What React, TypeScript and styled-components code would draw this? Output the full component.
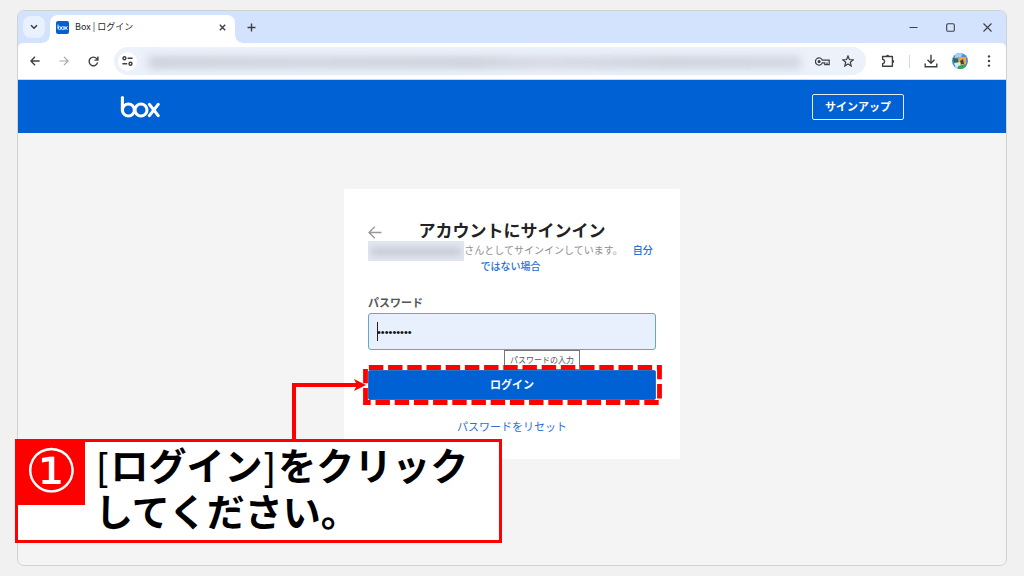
import React from "react";
import styled, { createGlobalStyle } from "styled-components";

const GlobalStyle = createGlobalStyle`
  *, *::before, *::after { box-sizing: border-box; }
  body {
    margin: 0;
    background: #f1f1f1;
    font-family: "Noto Sans CJK JP", "Noto Sans", sans-serif;
  }
  button, input { font-family: inherit; margin: 0; }
  a { text-decoration: none; }
`;

const Stage = styled.div`
  position: relative;
  min-height: 100vh;
  display: flex;
  flex-direction: column;
  padding: 10px 17px;
`;

const BrowserWindow = styled.div`
  flex: 1;
  display: flex;
  flex-direction: column;
  border: 1px solid #d0d1d3;
  border-radius: 7px;
  overflow: hidden;
  background: #f4f4f4;
`;

const TabStrip = styled.div`
  display: flex;
  align-items: center;
  height: 32px;
  padding: 0 0 0 5px;
  background: #d3e3fd;
`;

const IconButton = styled.button<{ $w?: number; $h?: number; $bg?: string; $r?: number }>`
  display: flex;
  align-items: center;
  justify-content: center;
  flex: none;
  width: ${(p) => p.$w ?? 22}px;
  height: ${(p) => p.$h ?? 22}px;
  padding: 0;
  border: 0;
  border-radius: ${(p) => p.$r ?? 11}px;
  background: ${(p) => p.$bg ?? "transparent"};
  color: #3c4043;
`;

const Tab = styled.div`
  position: relative;
  display: flex;
  align-items: center;
  align-self: flex-end;
  width: 185px;
  height: 28px;
  margin-left: 5px;
  padding: 0 2px 4px 6px;
  border-radius: 8px 8px 0 0;
  background: #fff;
  &::before, &::after {
    content: "";
    position: absolute;
    bottom: 0;
    width: 7px;
    height: 7px;
  }
  &::before {
    left: -7px;
    background: radial-gradient(circle at 0 0, transparent 6px, #fff 7px);
  }
  &::after {
    right: -7px;
    background: radial-gradient(circle at 100% 0, transparent 6px, #fff 7px);
  }
`;

const TabTitle = styled.span`
  flex: 1;
  margin-left: 6px;
  font-size: 9px;
  line-height: 14px;
  color: #1f1f1f;
  white-space: nowrap;
`;

const WindowControls = styled.div`
  display: flex;
  margin-left: auto;
`;

const ToolbarBack = styled.div`
  background: #d3e3fd;
`;

const Toolbar = styled.div`
  display: flex;
  align-items: center;
  height: 36px;
  padding: 0 6px;
  border-radius: 5px 5px 0 0;
  background: #fff;
`;

const NavButtons = styled.div`
  display: flex;
  gap: 7px;
`;

const Omnibox = styled.div`
  flex: 1;
  display: flex;
  align-items: center;
  height: 28px;
  margin-left: 10px;
  padding: 0 7px 0 4px;
  border-radius: 14px;
  background: #ecf1fa;
`;

const MaskedUrl = styled.div`
  flex: 1;
  height: 13px;
  margin: 2px 6px 0 11px;
  border-radius: 4px;
  background: linear-gradient(90deg, #cdd1db, #d1d5df 25%, #cdd1db 50%, #d6dae4 60%, #ced2dc 80%, #d2d6e0);
  filter: blur(4px);
`;

const ToolbarActions = styled.div`
  display: flex;
  align-items: center;
`;

const Divider = styled.span`
  width: 1px;
  height: 13px;
  margin-right: 10px;
  background: #c7dafb;
`;

const SiteHeader = styled.header`
  display: flex;
  align-items: center;
  justify-content: space-between;
  height: 54px;
  padding: 0 102px;
  border-top: 1px solid #c4dbf2;
  background: #0061d5;
  background-clip: padding-box;
`;

const LogoLink = styled.a`
  display: flex;
`;

const SignUpButton = styled.button`
  width: 92px;
  height: 26px;
  padding: 0 0 2px;
  border: 1px solid #e2edfa;
  border-radius: 2px;
  background: transparent;
  color: #fff;
  font-size: 11px;
  line-height: 16px;
  font-weight: 700;
`;

const Main = styled.main`
  flex: 1;
  display: flex;
  justify-content: center;
  align-items: flex-start;
  padding: 56px 0 16px;
`;

const Card = styled.form`
  width: 336px;
  padding: 28px 24px 25px;
  border-radius: 2px;
  background: #fff;
`;

const TitleRow = styled.div`
  display: grid;
  grid-template-columns: 14px 1fr 14px;
  align-items: center;
  height: 26px;
`;

const BackButton = styled.button`
  display: flex;
  padding: 4px 0 0;
  border: 0;
  background: none;
`;

const Title = styled.h1`
  margin: 0;
  font-size: 17px;
  line-height: 26px;
  font-weight: 700;
  color: #222;
  text-align: center;
  white-space: nowrap;
`;

const Notice = styled.p`
  margin: 0 0 0 -3px;
  font-family: "Liberation Sans", "Noto Sans CJK JP", sans-serif;
  font-size: 10px;
  line-height: 16px;
  color: #909090;
  text-align: center;
`;

const MaskedUser = styled.span`
  display: inline-block;
  width: 96px;
  height: 20px;
  margin: -2px 0;
  vertical-align: top;
  overflow: hidden;
  background: #e2e7f1;
  &::before {
    content: "";
    display: block;
    height: 9px;
    margin: 6px 3px;
    background: #c9cdd7;
    filter: blur(3px);
  }
`;

const TextLink = styled.a<{ $gap?: number }>`
  margin-left: ${(p) => p.$gap ?? 0}px;
  color: #2a70d8;
  font-weight: 500;
`;

const FieldLabel = styled.label`
  display: block;
  margin-top: 19px;
  font-size: 11px;
  line-height: 16px;
  font-weight: 700;
  color: #555;
`;

const Field = styled.div`
  position: relative;
  margin-top: 3px;
`;

const PasswordInput = styled.input`
  display: block;
  width: 100%;
  height: 37px;
  padding: 0 8px;
  border: 1px solid #64a5cc;
  border-radius: 3px;
  outline: 0;
  background: #e8f0fe;
  color: #111;
  font-family: "Liberation Sans", sans-serif;
  font-size: 11px;
`;

const Caret = styled.span`
  position: absolute;
  left: 9px;
  top: 9px;
  width: 1px;
  height: 19px;
  background: #222;
`;

const Tooltip = styled.span`
  position: absolute;
  left: 136px;
  top: 37px;
  width: 76px;
  height: 20px;
  border: 1px solid #767676;
  background: #fff;
  color: #575757;
  font-size: 8px;
  line-height: 18px;
  text-align: center;
  white-space: nowrap;
`;

const SubmitArea = styled.div`
  position: relative;
  margin-top: 20px;
`;

const LoginButton = styled.button`
  position: relative;
  display: block;
  width: 100%;
  height: 30px;
  padding: 0 0 2px;
  border: 1px solid #2c72c4;
  border-radius: 2px;
  background: #0061d5;
  color: #fff;
  font-size: 11px;
  line-height: 16px;
  font-weight: 700;
`;

const HighlightFrame = styled.svg`
  position: absolute;
  left: -5px;
  top: -5px;
  overflow: visible;
`;

const Arrow = styled.svg`
  position: absolute;
  left: -76px;
  top: 8px;
`;

const ResetLink = styled.a`
  display: block;
  margin-top: 18px;
  font-size: 11px;
  line-height: 16px;
  color: #2a70d8;
  text-align: center;
`;

const Callout = styled.aside`
  position: absolute;
  left: 15px;
  top: 439px;
  display: flex;
  align-items: flex-start;
  width: 487px;
  height: 104px;
  border: 3px solid #f00;
  background: #fff;
`;

const StepNumber = styled.span`
  flex: none;
  width: 67px;
  height: 63px;
  background: #f00;
  color: #fff;
  font-family: "DejaVu Sans", sans-serif;
  font-size: 60px;
  line-height: 58px;
  text-align: center;
`;

const CalloutText = styled.p`
  margin: 2px 0 0 10px;
  color: #000;
  font-family: "Liberation Sans", "Noto Sans CJK JP", sans-serif;
  font-size: 38px;
  line-height: 46px;
  font-weight: 700;
  white-space: nowrap;
`;

const Bracket = styled.span`
  margin: 0 3px 0 2px;
  font-weight: 400;
`;

const stroke = { fill: "none", stroke: "currentColor", strokeWidth: 1.4 } as const;

const BoxLogo = ({ width, height }: { width: number; height: number }) => (
  <svg width={width} height={height} viewBox="0 0 40 22" fill="none" stroke="#fff" strokeWidth="3.1" strokeLinecap="round" aria-label="box">
    <path d="M2.4 1.6V14.2" />
    <circle cx="8.4" cy="14" r="6" />
    <circle cx="21" cy="14" r="6" />
    <path d="M29.4 8.4L38.2 19.6M38.2 8.4L29.4 19.6" />
  </svg>
);

const Favicon = () => (
  <svg width="13" height="13" viewBox="0 0 13 13">
    <rect width="13" height="13" rx="2" fill="#0061d5" />
    <g fill="none" stroke="#fff" strokeWidth="0.9" strokeLinecap="round">
      <path d="M2 4V7.2M8.9 5.5L11.2 8.6M11.2 5.5L8.9 8.6" />
      <circle cx="3.6" cy="7.1" r="1.5" />
      <circle cx="6.8" cy="7.1" r="1.5" />
    </g>
  </svg>
);

export default function App() {
  return (
    <Stage>
      <GlobalStyle />
      <BrowserWindow>
        <TabStrip>
          <IconButton $bg="#e9f0fe" $r={8} aria-label="タブを検索">
            <svg width="8" height="6" viewBox="0 0 8 6" {...stroke} strokeWidth="1.6"><path d="M1 1.2L4 4.2L7 1.2" /></svg>
          </IconButton>
          <Tab>
            <Favicon />
            <TabTitle>Box | ログイン</TabTitle>
            <IconButton aria-label="タブを閉じる">
              <svg width="7" height="7" viewBox="0 0 7 7" {...stroke}><path d="M0.8 0.8L6.2 6.2M6.2 0.8L0.8 6.2" /></svg>
            </IconButton>
          </Tab>
          <IconButton $w={32} aria-label="新しいタブ">
            <svg width="9" height="9" viewBox="0 0 9 9" {...stroke}><path d="M4.5 0.5V8.5M0.5 4.5H8.5" /></svg>
          </IconButton>
          <WindowControls>
            <IconButton $w={37} aria-label="最小化">
              <svg width="9" height="9" viewBox="0 0 9 9" {...stroke} strokeWidth="1"><path d="M0.5 4.5H8.5" /></svg>
            </IconButton>
            <IconButton $w={37} aria-label="最大化">
              <svg width="9" height="9" viewBox="0 0 9 9" {...stroke} strokeWidth="1.1"><rect x="0.7" y="0.7" width="7.6" height="7.6" rx="1.4" /></svg>
            </IconButton>
            <IconButton $w={37} aria-label="閉じる">
              <svg width="9" height="9" viewBox="0 0 9 9" {...stroke} strokeWidth="1.1"><path d="M0.5 0.5L8.5 8.5M8.5 0.5L0.5 8.5" /></svg>
            </IconButton>
          </WindowControls>
        </TabStrip>
        <ToolbarBack>
          <Toolbar>
            <NavButtons>
              <IconButton aria-label="戻る">
                <svg width="10" height="10" viewBox="0 0 10 10" {...stroke}><path d="M9.6 5H1.2M5 0.8L0.9 5L5 9.2" /></svg>
              </IconButton>
              <IconButton aria-label="進む">
                <svg width="10" height="10" viewBox="0 0 10 10" {...stroke} stroke="#a5a7aa" strokeWidth="1.2"><path d="M0.4 5H8.8M5 0.8L9.1 5L5 9.2" /></svg>
              </IconButton>
              <IconButton aria-label="再読み込み">
                <svg width="11" height="11" viewBox="0 0 11 11" {...stroke}><path d="M9.6 6.4A4.3 4.3 0 1 1 8.7 2.6L9.8 3.8M9.9 0.6V4.1H6.4" /></svg>
              </IconButton>
            </NavButtons>
            <Omnibox>
              <IconButton $w={19} $h={19} $bg="#fff" aria-label="サイト情報">
                <svg width="11" height="10" viewBox="0 0 11 10" {...stroke}>
                  <circle cx="2.4" cy="2.3" r="1.5" /><path d="M5.6 2.3H10.6M0.4 7.7H5.2" /><circle cx="8.5" cy="7.7" r="1.5" />
                </svg>
              </IconButton>
              <MaskedUrl />
              <IconButton $w={30} aria-label="パスワードを管理">
                <svg width="15" height="9" viewBox="0 0 15 9" {...stroke} strokeWidth="1.2">
                  <path d="M7.4 3.2A3.6 3.6 0 1 0 7.4 5.8H9.8V7.6H14.2V3.2Z" /><circle cx="4.1" cy="4.5" r="1" fill="currentColor" /><path d="M12 5.6V7.6" />
                </svg>
              </IconButton>
              <IconButton aria-label="ブックマーク">
                <svg width="12" height="12" viewBox="0 0 12 12" {...stroke} strokeWidth="1.2"><path d="M6 1L7.4 4.5L11.2 4.8L8.3 7.2L9.2 11L6 9L2.8 11L3.7 7.2L0.8 4.8L4.6 4.5Z" /></svg>
              </IconButton>
            </Omnibox>
            <ToolbarActions>
              <IconButton $w={43} aria-label="拡張機能">
                <svg width="14" height="14" viewBox="0 0 14 14" {...stroke}>
                  <path d="M1.6 2.5H11.4V12.3H1.6V9.6C4.3 9.2 4.3 5.6 1.6 5.2Z" strokeLinejoin="round" />
                  <path d="M5 2.4A1.6 1.6 0 0 1 8.2 2.4ZM11.6 5.8A1.6 1.6 0 0 1 11.6 9Z" fill="currentColor" stroke="none" />
                </svg>
              </IconButton>
              <Divider />
              <IconButton aria-label="ダウンロード">
                <svg width="14" height="14" viewBox="0 0 14 14" {...stroke}><path d="M7 0.8V9M3.5 5.7L7 9.2L10.5 5.7M1.2 9.6V12.8H12.8V9.6" /></svg>
              </IconButton>
              <IconButton $w={36} aria-label="プロフィール">
                <svg width="16" height="16" viewBox="0 0 16 16">
                  <defs><clipPath id="avatar"><circle cx="8" cy="8" r="8" /></clipPath></defs>
                  <g clipPath="url(#avatar)">
                    <rect width="16" height="16" fill="#4a8fe0" />
                    <path d="M3 0H11L9 4L3 5Z" fill="#a9cdf3" />
                    <path d="M1 5L6 6L8 11L2 11Z" fill="#2d6b56" />
                    <path d="M7 4H14V12H10L6 8Z" fill="#f0a53a" />
                    <path d="M8 8L11 6L12 11H9Z" fill="#4b4038" />
                    <path d="M2 10L8 9L9 13L4 15Z" fill="#dce8f2" />
                    <path d="M6 13L14 11V16H6Z" fill="#34a455" />
                  </g>
                </svg>
              </IconButton>
              <IconButton aria-label="メニュー">
                <svg width="4" height="12" viewBox="0 0 4 12" fill="currentColor"><circle cx="2" cy="1.4" r="1.2" /><circle cx="2" cy="6" r="1.2" /><circle cx="2" cy="10.6" r="1.2" /></svg>
              </IconButton>
            </ToolbarActions>
          </Toolbar>
        </ToolbarBack>
        <SiteHeader>
          <LogoLink href="#"><BoxLogo width={40} height={22} /></LogoLink>
          <SignUpButton type="button">サインアップ</SignUpButton>
        </SiteHeader>
        <Main>
          <Card onSubmit={(e) => e.preventDefault()}>
            <TitleRow>
              <BackButton type="button" aria-label="戻る">
                <svg width="14" height="13" viewBox="0 0 14 13" fill="none" stroke="#999" strokeWidth="1.4"><path d="M13.5 6.5H1.2M6.8 0.8L1 6.5L6.8 12.2" /></svg>
              </BackButton>
              <Title>アカウントにサインイン</Title>
            </TitleRow>
            <Notice>
              <MaskedUser />さんとしてサインインしています。<TextLink href="#" $gap={10}>自分ではない場合</TextLink>
            </Notice>
            <FieldLabel htmlFor="password">パスワード</FieldLabel>
            <Field>
              <PasswordInput id="password" type="password" defaultValue="password1" />
              <Caret />
              <Tooltip role="tooltip">パスワードの入力</Tooltip>
            </Field>
            <SubmitArea>
              <LoginButton type="submit">ログイン</LoginButton>
              <HighlightFrame width="298" height="40" viewBox="0 0 298 40" aria-hidden="true">
                <path d="M2.5 37.5V2.5H296.5V37.5Z" fill="none" stroke="#f00" strokeWidth="4.8" strokeDasharray="14.4 4.8" />
              </HighlightFrame>
              <Arrow width="76" height="64" viewBox="0 0 76 64" aria-hidden="true">
                <path d="M2 64V7H66" fill="none" stroke="#f00" strokeWidth="4" />
                <path d="M62 1L74 7L62 13L65 7Z" fill="#f00" />
              </Arrow>
            </SubmitArea>
            <ResetLink href="#">パスワードをリセット</ResetLink>
          </Card>
        </Main>
      </BrowserWindow>
      <Callout>
        <StepNumber>①</StepNumber>
        <CalloutText>
          <Bracket>[</Bracket>ログイン<Bracket>]</Bracket>をクリック
          <br />
          してください。
        </CalloutText>
      </Callout>
    </Stage>
  );
}
